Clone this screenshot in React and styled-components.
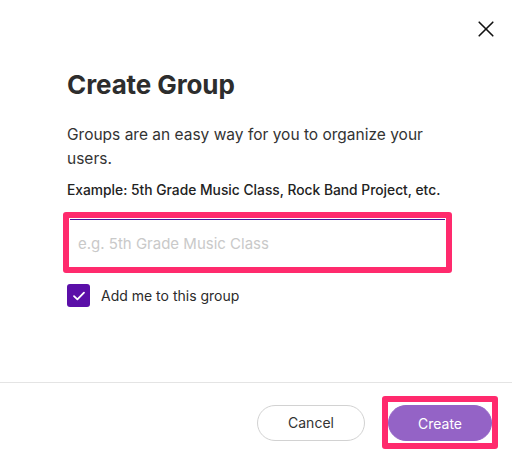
import React from "react";
import styled, { createGlobalStyle } from "styled-components";

const GlobalStyle = createGlobalStyle`
  html, body {
    margin: 0;
    padding: 0;
    background: #ffffff;
  }

  * {
    box-sizing: border-box;
  }
`;

const Modal = styled.div`
  width: 512px;
  height: 461px;

  display: flex;
  flex-direction: column;

  background-color: #ffffff;
  font-family: "Inter", "Liberation Sans", sans-serif;
  color: #2b2b2b;
`;

const TopBar = styled.div`
  height: 58px;

  display: flex;
  justify-content: flex-end;
  align-items: center;

  padding-right: 15px;
`;

const CloseButton = styled.button`
  width: 22px;
  height: 22px;

  display: flex;
  justify-content: center;
  align-items: center;

  padding: 0;
  border: none;
  background: none;
  cursor: pointer;
`;

const Body = styled.div`
  flex: 1;

  padding: 12px 60px 0px 67px;
`;

const Title = styled.h1`
  margin: 0 0 23px 0;

  font-size: 26px;
  font-weight: 700;
  line-height: 30px;
  letter-spacing: -0.1px;

  color: #2d2d2d;
`;

const Description = styled.p`
  margin: 0 0 10px 0;

  font-size: 15.5px;
  font-weight: 400;
  line-height: 24px;

  color: #333333;
`;

const Example = styled.p`
  margin: 0 0 13px 0;

  font-size: 13.8px;
  font-weight: 500;
  line-height: 18px;

  color: #222222;
`;

const Highlight = styled.div`
  display: inline-flex;

  padding: ${(props) => props.$pad || "1px"};
  margin-left: ${(props) => props.$offset || "0px"};

  border: 6px solid #ff2a6d;
  border-radius: 3px;
  background-color: #ffffff;
`;

const NameInput = styled.input`
  width: 375px;
  height: 47px;

  padding: 0 8px;

  border: none;
  border-top: 1px solid #4a0d9c;
  outline: none;

  font-family: "Inter", "Liberation Sans", sans-serif;
  font-size: 15px;
  color: #2b2b2b;

  &::placeholder {
    color: #c9c9c9;
  }
`;

const CheckRow = styled.label`
  display: flex;
  align-items: center;
  gap: 11px;

  margin-top: 11px;

  font-size: 14px;
  color: #2b2b2b;
  cursor: pointer;
`;

const CheckBox = styled.span`
  width: 23px;
  height: 23px;

  display: flex;
  justify-content: center;
  align-items: center;

  border-radius: 3px;
  background-color: #5b0fa8;
`;

const Footer = styled.div`
  height: 79px;

  display: flex;
  justify-content: flex-end;
  align-items: center;
  gap: 17px;

  padding: 1px 14px 0 0;

  border-top: 1px solid #e4e4e4;
`;

const PillButton = styled.button`
  width: ${(props) => props.$width || "108px"};
  height: 36px;

  border-radius: 18px;
  border: 1px solid ${(props) => (props.$primary ? "#9463c6" : "#d2d2d2")};
  background-color: ${(props) => (props.$primary ? "#9463c6" : "#ffffff")};

  font-family: "Inter", "Liberation Sans", sans-serif;
  font-size: 14px;
  font-weight: 400;
  color: ${(props) => (props.$primary ? "#ffffff" : "#333333")};
  cursor: pointer;
`;

const App = () => {
  return (
    <>
      <GlobalStyle />
      <Modal>
        <TopBar>
          <CloseButton aria-label="Close">
            <svg width="16" height="16" viewBox="0 0 16 16">
              <path
                d="M1.2 1.2 L14.8 14.8 M14.8 1.2 L1.2 14.8"
                stroke="#111111"
                strokeWidth="1.6"
                strokeLinecap="round"
              />
            </svg>
          </CloseButton>
        </TopBar>
        <Body>
          <Title>Create Group</Title>
          <Description>
            Groups are an easy way for you to organize your users.
          </Description>
          <Example>Example: 5th Grade Music Class, Rock Band Project, etc.</Example>
          <Highlight $offset="-4px">
            <NameInput placeholder="e.g. 5th Grade Music Class" />
          </Highlight>
          <CheckRow>
            <CheckBox>
              <svg width="14" height="14" viewBox="0 0 14 14">
                <path
                  d="M2 7.2 L5.4 10.4 L12 3.6"
                  fill="none"
                  stroke="#ffffff"
                  strokeWidth="1.8"
                  strokeLinecap="round"
                  strokeLinejoin="round"
                />
              </svg>
            </CheckBox>
            Add me to this group
          </CheckRow>
        </Body>
        <Footer>
          <PillButton>Cancel</PillButton>
          <Highlight $pad="3px 0px 2px 0px">
            <PillButton $primary $width="104px">
              Create
            </PillButton>
          </Highlight>
        </Footer>
      </Modal>
    </>
  );
};

export default App;
